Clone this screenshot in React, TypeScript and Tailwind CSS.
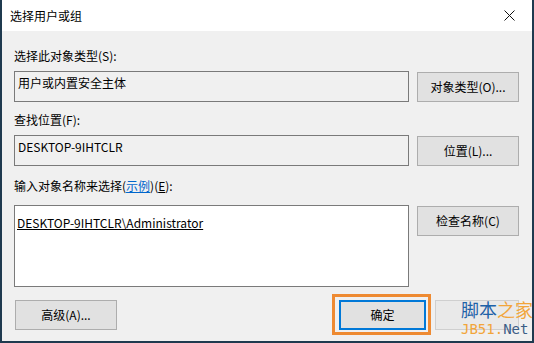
const font = { fontFamily: '"Noto Sans CJK SC", "Noto Sans", sans-serif' };

const Btn = ({ label, className = "" }: { label: React.ReactNode; className?: string }) => (
  <div
    className={`flex items-center justify-center border border-[#adadad] bg-[#e1e1e1] text-[12px] text-black ${className}`}
  >
    {label}
  </div>
);

export default function App() {
  return (
    <div
      className="relative flex h-[343px] w-[534px] flex-col overflow-hidden border-b-2 border-l-2 border-r-2 border-[#1f3a4f] bg-[#f0f0f0] leading-[16px] text-black"
      style={font}
    >
      {/* title bar */}
      <div className="flex h-[31px] shrink-0 items-center justify-between bg-white pl-[8px] pr-[17px] text-[12px]">
        <span className="mt-[1px]">选择用户或组</span>
        <svg width="11" height="11" viewBox="0 0 11 11" className="mt-[-1px]">
          <path d="M0.5 0.5 L10.5 10.5 M10.5 0.5 L0.5 10.5" stroke="#111" strokeWidth="1" />
        </svg>
      </div>

      <div className="flex flex-1 flex-col pl-[12px] pr-[13px] text-[12px]">
        <div className="mt-[17px] h-[16px]">选择此对象类型(S):</div>
        <div className="mt-[7px] flex items-start">
          <div className="h-[31px] flex-1 border border-[#7a7a7a] px-[3px] pt-[3px]">用户或内置安全主体</div>
          <Btn label="对象类型(O)..." className="ml-[8px] mt-[1px] h-[30px] w-[102px]" />
        </div>

        <div className="mt-[10px] h-[16px]">查找位置(F):</div>
        <div className="mt-[7px] flex items-start">
          <div className="h-[31px] flex-1 border border-[#7a7a7a] px-[3px] pt-[3px]">DESKTOP-9IHTCLR</div>
          <Btn label="位置(L)..." className="ml-[8px] mt-[1px] h-[30px] w-[102px]" />
        </div>

        <div className="mt-[12px] h-[16px]">
          输入对象名称来选择(<span className="text-[#0066cc] underline">示例</span>)(<span className="underline">E</span>):
        </div>
        <div className="mt-[11px] flex items-start">
          <div className="h-[82px] flex-1 border border-[#7a7a7a] bg-white px-[2px] pt-[9px]">
            <span className="underline">DESKTOP-9IHTCLR\Administrator</span>
          </div>
          <Btn label="检查名称(C)" className="ml-[8px] mt-[1px] h-[30px] w-[102px]" />
        </div>

        <div className="mt-[13px] flex items-start">
          <Btn label="高级(A)..." className="ml-[1px] h-[30px] w-[102px]" />
          <div className="flex-1" />
          <div className="flex h-[30px] w-[87px] items-center justify-center border-2 border-[#0078d7] bg-[#e1e1e1]">
            确定
          </div>
          <div className="ml-[9px] h-[30px] w-[84px] border border-[#cfcfcf] bg-[#e9e9e9]" />
        </div>
      </div>

      {/* highlight frame around OK */}
      <div className="absolute left-[330px] top-[294px] h-[41px] w-[99px] border-[3px] border-[#ee8a32]" />

      {/* watermark */}
      <div className="absolute left-[459px] top-[298px] flex flex-col items-start">
        <div className="whitespace-nowrap text-[18px] leading-[22px]" style={font}>
          <span className="text-[#1f62a8]">脚本</span>
          <span className="text-[#f2a53a]">之家</span>
        </div>
        <div
          className="whitespace-nowrap text-[14px] leading-[18px]"
          style={{ fontFamily: '"DejaVu Sans Mono", monospace' }}
        >
          <span className="text-[#f2a53a]">JB51.</span>
          <span className="text-[#3b5d86]">Net</span>
        </div>
      </div>
    </div>
  );
}
